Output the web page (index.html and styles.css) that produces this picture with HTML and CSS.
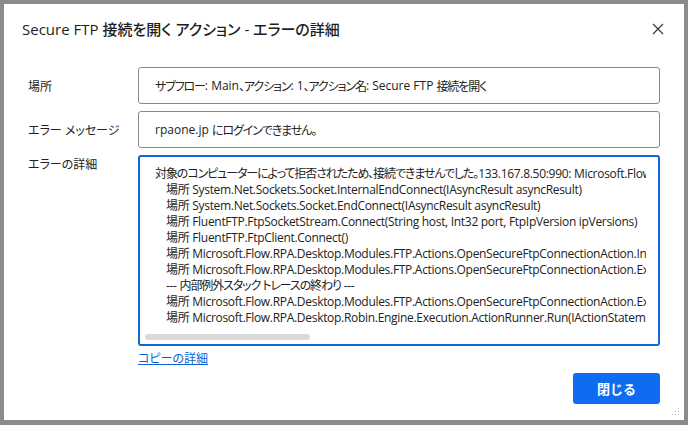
FILE: index.html
```html
<!DOCTYPE html>
<html lang="ja">
<head>
<meta charset="utf-8">
<link rel="stylesheet" href="styles.css">
</head>
<body>
<div class="dialog">
  <div class="header">
    <h1 class="title">Secure FTP <span class="jp">接続を開く アクション</span> - <span class="jp">エラーの詳細</span></h1>
    <button class="close" aria-label="閉じる">
      <svg width="12" height="12" viewBox="0 0 12 12"><path d="M1 1 L11 11 M11 1 L1 11" stroke="#333" stroke-width="1.1" fill="none"/></svg>
    </button>
  </div>
  <div class="form">
    <div class="label">場所</div>
    <div class="field"><span class="jp">サブフロー</span>: Main<span class="jp">、アクション</span>: 1<span class="jp">、アクション名</span>: Secure FTP <span class="jp">接続を開く</span></div>
    <div class="label">エラー メッセージ</div>
    <div class="field">rpaone.jp <span class="jp">にログインできません。</span></div>
    <div class="label label-top">エラーの詳細</div>
    <div class="details-col">
      <div class="details">
        <div class="details-text"><div><span class="jp">対象のコンピューターによって拒否されたため、接続できませんでした。</span>133.167.8.50:990: Microsoft.Flow.RPA.Desktop.Modules.FTP.Actions.FtpException</div><div class="ind">場所 System.Net.Sockets.Socket.InternalEndConnect(IAsyncResult asyncResult)</div><div class="ind">場所 System.Net.Sockets.Socket.EndConnect(IAsyncResult asyncResult)</div><div class="ind">場所 FluentFTP.FtpSocketStream.Connect(String host, Int32 port, FtpIpVersion ipVersions)</div><div class="ind">場所 FluentFTP.FtpClient.Connect()</div><div class="ind">場所 Microsoft.Flow.RPA.Desktop.Modules.FTP.Actions.OpenSecureFtpConnectionAction.InitializeClient()</div><div class="ind">場所 Microsoft.Flow.RPA.Desktop.Modules.FTP.Actions.OpenSecureFtpConnectionAction.Execute(ActionContext context)</div><div class="ind">--- <span class="jp">内部例外スタック トレースの終わり</span> ---</div><div class="ind">場所 Microsoft.Flow.RPA.Desktop.Modules.FTP.Actions.OpenSecureFtpConnectionAction.Execute(ActionContext context)</div><div class="ind">場所 Microsoft.Flow.RPA.Desktop.Robin.Engine.Execution.ActionRunner.Run(IActionStatement statement)</div></div>
        <div class="hscroll"><div class="thumb"></div></div>
      </div>
      <a class="copy" href="#">コピーの詳細</a>
    </div>
  </div>
  <div class="footer">
    <button class="primary">閉じる</button>
  </div>
  <svg class="grip" width="10" height="10" viewBox="0 0 10 10"><g fill="#b5b5b5"><rect x="8" y="0" width="1" height="1"/><rect x="8" y="3" width="1" height="1"/><rect x="5" y="3" width="1" height="1"/><rect x="8" y="6" width="1" height="1"/><rect x="5" y="6" width="1" height="1"/><rect x="2" y="6" width="1" height="1"/></g></svg>
</div>
</body>
</html>
```

FILE: styles.css
```css
html, body {
  margin: 0;
  padding: 0;
}
body {
  background: #8b8b8b;
  width: 688px;
  height: 425px;
  overflow: hidden;
  font-family: "Open Sans", "Noto Sans CJK JP", sans-serif;
  font-feature-settings: "palt" 1;
  color: #222;
}
.jp {
  letter-spacing: -1.1px;
}
.dialog {
  position: relative;
  margin: 4px 0 0 4px;
  width: 680px;
  height: 416px;
  background: #fff;
  box-sizing: border-box;
  display: flex;
  flex-direction: column;
}
.header {
  display: flex;
  align-items: center;
  justify-content: space-between;
  padding: 7px 18px 0 18px;
  height: 36px;
}
.title {
  margin: 0;
  font-size: 15px;
  font-weight: 500;
  color: #1e1e1e;
  line-height: 20px;
}
.title .jp {
  letter-spacing: 0;
}
.close {
  border: 0;
  background: none;
  padding: 0;
  margin-right: 2px;
  width: 12px;
  height: 12px;
  display: flex;
}
.form {
  display: grid;
  grid-template-columns: 110px 522px;
  column-gap: 0;
  row-gap: 7px;
  padding: 20px 24px 0 24px;
}
.label {
  font-size: 12px;
  display: flex;
  align-items: center;
  color: #222;
}
.label-top {
  align-items: flex-start;
  padding-top: 0;
}
.field {
  height: 37px;
  box-sizing: border-box;
  border: 1px solid #8a8a8a;
  border-radius: 3px;
  padding: 0 16px;
  font-size: 12px;
  display: flex;
  align-items: center;
  white-space: pre;
  color: #222;
}
.details {
  height: 191px;
  box-sizing: border-box;
  border: 2px solid #1266d6;
  border-radius: 3px;
  padding: 9px 12px 0 15px;
  display: flex;
  flex-direction: column;
  overflow: hidden;
}
.details-text {
  flex: 1;
  font-size: 12px;
  line-height: 16px;
  letter-spacing: -0.3px;
  white-space: pre;
  overflow: hidden;
  color: #222;
}
.ind {
  padding-left: 11px;
}
.hscroll {
  height: 6px;
  margin: 0 0 4px -10px;
}
.thumb {
  width: 165px;
  height: 6px;
  border-radius: 3px;
  background: #d9d9d9;
}
.copy {
  display: inline-block;
  margin-top: 0;
  font-size: 12px;
  line-height: 16px;
  color: #0b63d1;
  text-decoration: underline;
}
.footer {
  display: flex;
  justify-content: flex-end;
  padding: 5px 24px 0 0;
}
.primary {
  width: 87px;
  height: 31px;
  border: 0;
  border-radius: 3px;
  background: #0f6cf2;
  color: #fff;
  font-family: inherit;
  font-size: 13px;
  font-weight: 700;
}
.grip {
  position: absolute;
  right: 4px;
  bottom: 2px;
}
```
